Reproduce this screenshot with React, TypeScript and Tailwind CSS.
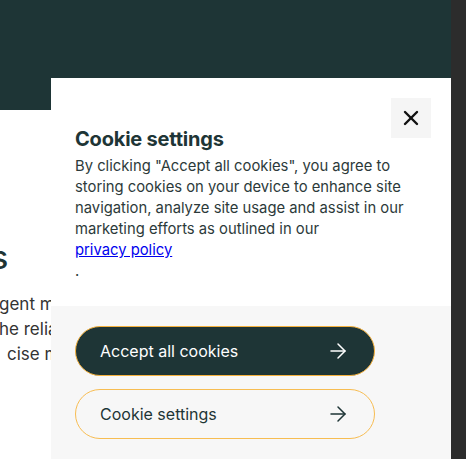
import { ArrowRight, X } from "lucide-react";

export default function App() {
  return (
    <div className="flex h-[459px] w-[466px] overflow-hidden bg-white font-['Inter',sans-serif]">
      <div className="relative h-full w-[451px] overflow-hidden">
        <header className="h-[110px] bg-[#1e3536]" />
        <main className="pt-[128px] text-[#1e3536]">
          <h2 className="-ml-[9px] text-[32px] leading-[40px] font-medium">
            s
          </h2>
          <p className="mt-[14px] whitespace-nowrap text-[17px] leading-[25px] text-[#333]">
            <span className="block -ml-[1px]">gent management</span>
            <span className="block -ml-[1px]">he reliability</span>
            <span className="block ml-[7px]">cise monitoring</span>
          </p>
        </main>

        <div className="absolute top-[78px] bottom-0 left-[51px] flex w-[400px] flex-col">
          <section className="relative bg-white px-6 pt-[47px] pb-6">
            <button className="absolute top-5 right-5 flex h-10 w-10 items-center justify-center bg-[#f5f5f5] text-[#111]">
              <X size={24} strokeWidth={2.4} />
            </button>
            <h1 className="text-[20px] leading-7 font-bold tracking-[-0.2px] text-[#1e3536]">
              Cookie settings
            </h1>
            <p className="mt-[3px] text-[14.8px] leading-[21px] text-[#2c3a3a]">
              By clicking "Accept all cookies", you agree to storing cookies on
              your device to enhance site navigation, analyze site usage and
              assist in our marketing efforts as outlined in our{" "}
              <a href="#" className="block text-[#0000ee] underline">
                privacy policy
              </a>
              .
            </p>
          </section>
          <section className="flex flex-1 flex-col gap-[13px] bg-[#f7f7f7] px-6 pt-5">
            <button className="flex h-[50px] w-[300px] items-center justify-between rounded-full border border-[#f5b13d] bg-[#1e3536] pr-6 pl-6 text-[16px] text-white">
              <span>Accept all cookies</span>
              <ArrowRight size={24} strokeWidth={1.5} />
            </button>
            <button className="flex h-[50px] w-[300px] items-center justify-between rounded-full border border-[#f7bd52] pr-6 pl-6 text-[16px] text-[#1e3536]">
              <span>Cookie settings</span>
              <ArrowRight size={24} strokeWidth={1.5} />
            </button>
          </section>
        </div>
      </div>
      <div className="h-full w-[15px] bg-[#2c2c2c]" />
    </div>
  );
}
